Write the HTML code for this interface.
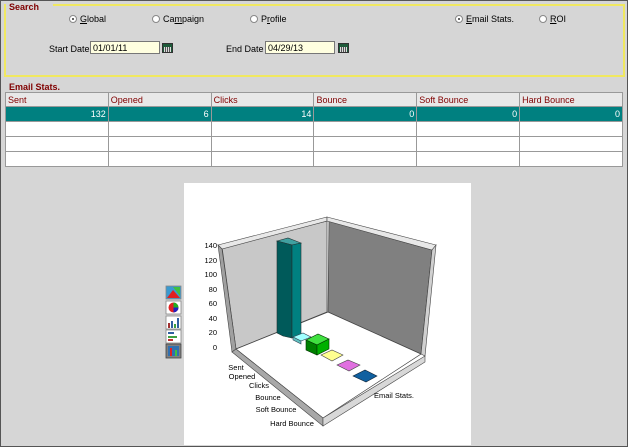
<!DOCTYPE html>
<html><head><meta charset="utf-8"><style>
*{margin:0;padding:0;box-sizing:border-box}
body{width:628px;height:447px;background:#d6d6d6;font-family:"Liberation Sans",Arial,sans-serif;font-size:9px;position:relative;overflow:hidden}
.frame{position:absolute;left:0;top:0;width:628px;height:447px;border:1px solid #555;border-right-color:#555}
.abs{position:absolute}
.lbl{color:#800000;font-weight:bold;font-size:9px}
.radio{display:inline-block;width:8px;height:8px;border-radius:50%;background:#fff;border:1px solid #888;vertical-align:-1px;margin-right:3px;position:relative}
.radio.on:after{content:"";position:absolute;left:2px;top:2px;width:2px;height:2px;background:#333;border-radius:50%}
.inp{position:absolute;height:13px;background:#ffffe0;border:1px solid #777;font-size:9px;padding:1px 2px}
.cal{position:absolute;width:11px;height:10px;background:#1e5b3a;border:1px solid #333}
.cal:after{content:"";position:absolute;left:1px;top:3px;width:7px;height:5px;background:repeating-linear-gradient(90deg,#ddd 0 1px,#555 1px 2px)}
table{position:absolute;left:5px;top:92px;border-collapse:collapse;width:618px}
td{border:1px solid #999;height:15px;width:103px;font-size:9px;padding:0 2px;background:#fff}
tr.h td{background:#e8e8e8;color:#800000;height:14px}
tr.s td{background:#008080;color:#fff;text-align:right}
</style></head><body>
<div class="frame"></div>
<div class="abs" style="left:4px;top:4px;width:621px;height:73px;border:2px solid #f0e860;border-top:none"></div>
<div class="abs" style="left:53px;top:4px;width:572px;height:2px;background:#f0e860"></div>
<div class="abs lbl" style="left:9px;top:2px">Search</div>
<div class="abs" style="left:69px;top:14px"><span class="radio on"></span><u>G</u>lobal</div>
<div class="abs" style="left:152px;top:14px"><span class="radio"></span>Ca<u>m</u>paign</div>
<div class="abs" style="left:250px;top:14px"><span class="radio"></span>P<u>r</u>ofile</div>
<div class="abs" style="left:455px;top:14px"><span class="radio on"></span><u>E</u>mail Stats.</div>
<div class="abs" style="left:539px;top:14px"><span class="radio"></span><u>R</u>OI</div>
<div class="abs" style="left:49px;top:44px">Start Date</div>
<div class="inp" style="left:90px;top:41px;width:70px">01/01/11</div>
<div class="cal" style="left:162px;top:43px"></div>
<div class="abs" style="left:226px;top:44px">End Date</div>
<div class="inp" style="left:265px;top:41px;width:70px">04/29/13</div>
<div class="cal" style="left:338px;top:43px"></div>
<div class="abs lbl" style="left:9px;top:82px">Email Stats.</div>
<table>
<tr class="h"><td>Sent</td><td>Opened</td><td>Clicks</td><td>Bounce</td><td>Soft Bounce</td><td>Hard Bounce</td></tr>
<tr class="s"><td>132</td><td>6</td><td>14</td><td>0</td><td>0</td><td>0</td></tr>
<tr><td></td><td></td><td></td><td></td><td></td><td></td></tr>
<tr><td></td><td></td><td></td><td></td><td></td><td></td></tr>
<tr><td></td><td></td><td></td><td></td><td></td><td></td></tr>
</table>
<div class="abs" style="left:184px;top:183px;width:287px;height:262px;background:#fff"></div>
<svg class="abs" style="left:0;top:0" width="628" height="447" font-family="Liberation Sans,Arial,sans-serif" font-size="7.5">
<!-- walls -->
<polygon points="222,247 327,221 327,312 236,349" fill="#c8c8c8" stroke="#444" stroke-width="0.7"/>
<polygon points="329,221 432,250 421,354 328,312" fill="#808080" stroke="#444" stroke-width="0.7"/>
<polygon points="218,245 327,217 327,221 222,249" fill="#e8e8e8" stroke="#444" stroke-width="0.6"/>
<polygon points="327,217 436,245 432,250 327,221" fill="#e8e8e8" stroke="#444" stroke-width="0.6"/>
<polygon points="218,245 222,249 236,349 232,352" fill="#a0a0a0" stroke="#444" stroke-width="0.6"/>
<polygon points="436,245 432,250 421,354 425,356" fill="#d0d0d0" stroke="#444" stroke-width="0.6"/>
<!-- floor -->
<polygon points="236,349 328,312 421,354 323,418" fill="#fff" stroke="#444" stroke-width="0.7"/>
<polygon points="232,352 236,349 323,418 323,426" fill="#a8a8a8" stroke="#444" stroke-width="0.6"/>
<polygon points="323,418 425,356 425,362 323,426" fill="#d8d8d8" stroke="#444" stroke-width="0.6"/>
<!-- bars -->
<polygon points="277,241 288,238 301,243 292,245" fill="#40a0a0" stroke="#233" stroke-width="0.6"/>
<polygon points="277,241 292,245 292,338 283,336 277,333" fill="#005a5a" stroke="#233" stroke-width="0.6"/>
<polygon points="292,245 301,243 301,334 292,338" fill="#008080" stroke="#233" stroke-width="0.6"/>
<polygon points="293,337 303,333 311,337 301,341" fill="#a0ffff" stroke="#345" stroke-width="0.6"/>
<polygon points="293,337 301,341 301,344 293,340" fill="#60c0c0" stroke="#345" stroke-width="0.6"/>
<polygon points="306,340 318,334 329,339 317,345" fill="#40e040" stroke="#030" stroke-width="0.6"/>
<polygon points="306,340 317,345 317,355 306,350" fill="#008000" stroke="#030" stroke-width="0.6"/>
<polygon points="317,345 329,339 329,349 317,355" fill="#00b000" stroke="#030" stroke-width="0.6"/>
<polygon points="321,355 332,350 343,355 332,361" fill="#ffff90" stroke="#444" stroke-width="0.6"/>
<polygon points="337,365 348,360 360,365 349,371" fill="#e070e0" stroke="#444" stroke-width="0.6"/>
<polygon points="353,376 365,370 377,376 366,382" fill="#1060a0" stroke="#123" stroke-width="0.6"/>
<!-- y labels -->
<g text-anchor="end" fill="#000">
<text x="217" y="248">140</text><text x="217" y="263">120</text><text x="217" y="277">100</text>
<text x="217" y="292">80</text><text x="217" y="306">60</text><text x="217" y="321">40</text>
<text x="217" y="335">20</text><text x="217" y="350">0</text></g>
<g text-anchor="middle" fill="#000">
<text x="236" y="370">Sent</text><text x="242" y="379">Opened</text><text x="259" y="388">Clicks</text>
<text x="268" y="400">Bounce</text><text x="276" y="412">Soft Bounce</text><text x="292" y="426">Hard Bounce</text>
<text x="394" y="398">Email Stats.</text></g>
<!-- side icons -->
<g stroke="#888" stroke-width="0.8">
<rect x="166" y="286" width="15" height="13" fill="#3a9ad0"/><polygon points="167,298 173,290 180,298" fill="#e02020" stroke="none"/><polygon points="173,287 180,287 180,296" fill="#40c040" stroke="none"/>
<rect x="166" y="301" width="15" height="13" fill="#fff"/><circle cx="173.5" cy="307.5" r="5" fill="#e02020" stroke="none"/><path d="M173.5 307.5 L173.5 302.5 A5 5 0 0 1 178.5 307.5Z" fill="#20b020" stroke="none"/><path d="M173.5 307.5 L178.5 307.5 A5 5 0 0 1 173.5 312.5Z" fill="#2020c0" stroke="none"/>
<rect x="166" y="316" width="15" height="13" fill="#fff"/><rect x="168" y="323" width="2" height="5" fill="#a03030" stroke="none"/><rect x="171" y="321" width="2" height="7" fill="#3060a0" stroke="none"/><rect x="174" y="324" width="2" height="4" fill="#40a040" stroke="none"/><rect x="177" y="318" width="2" height="10" fill="#3060a0" stroke="none"/>
<rect x="166" y="330" width="15" height="13" fill="#fff"/><rect x="168" y="332" width="6" height="2" fill="#3060a0" stroke="none"/><rect x="168" y="336" width="9" height="2" fill="#40a040" stroke="none"/><rect x="168" y="339" width="5" height="2" fill="#c03030" stroke="none"/>
<rect x="166" y="344" width="15" height="14" fill="#808080" stroke="#444"/><rect x="168" y="346" width="11" height="10" fill="#3070b0" stroke="none"/><rect x="170" y="348" width="2" height="8" fill="#e02020" stroke="none"/><rect x="175" y="350" width="2" height="6" fill="#40c040" stroke="none"/>
</g>
</svg>
</body></html>
